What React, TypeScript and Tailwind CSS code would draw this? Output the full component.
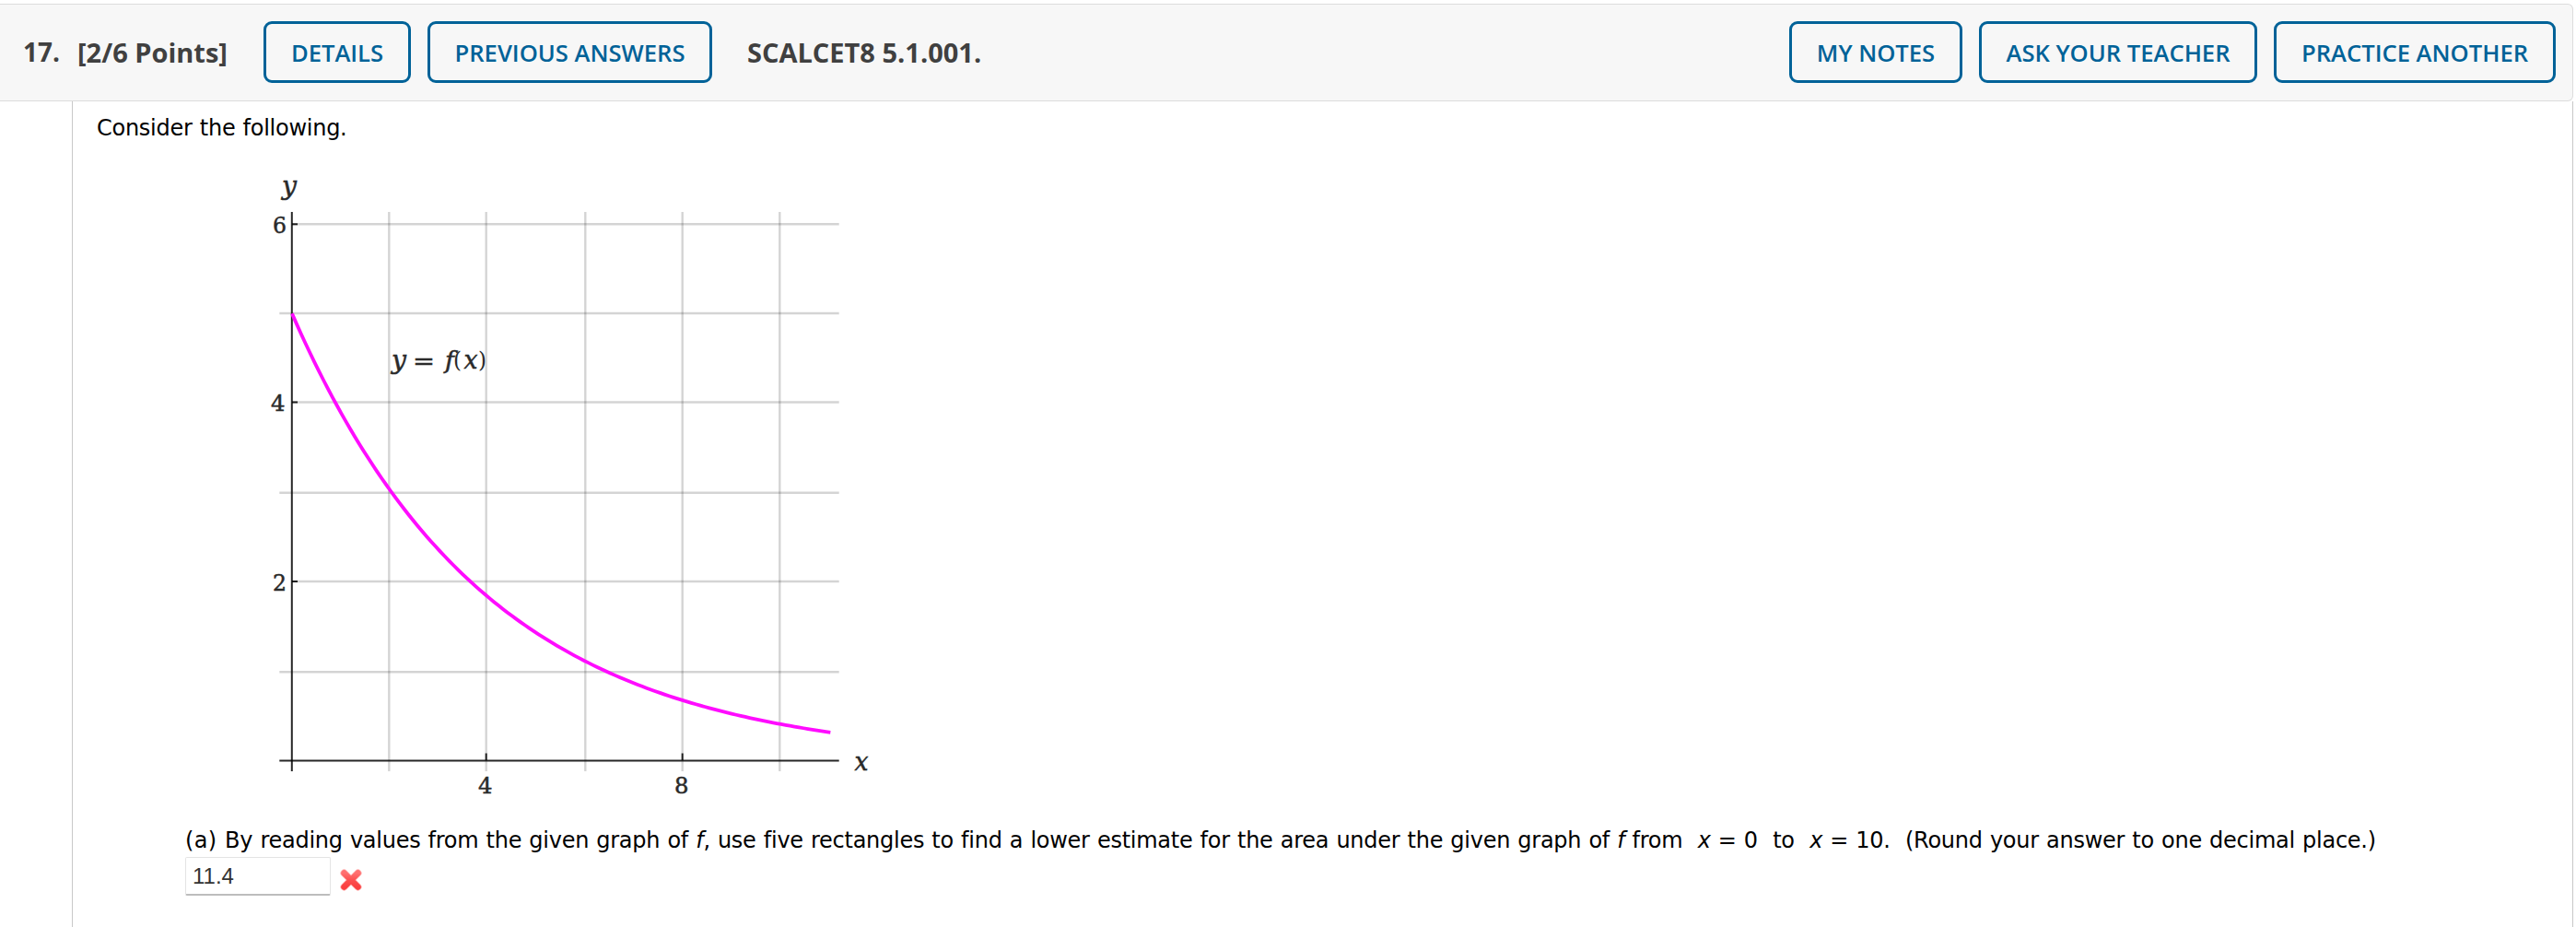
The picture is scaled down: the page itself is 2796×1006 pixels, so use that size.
import React from 'react';

const X0 = 317;
const Y0 = 825.5;
const UNIT_X = 52.93;
const UNIT_Y = 97.03;
const X_MAX = 11.04;
const STEPS = 120;

const gridX = [422.3, 527.7, 635.3, 740.7, 846.3];
const gridY = [243.3, 340, 436.5, 534.7, 631, 729.3];

const curvePoints = () => {
  const points: string[] = [];
  for (let i = 0; i <= STEPS; i++) {
    const x = (i / STEPS) * X_MAX;
    const px = X0 + x * UNIT_X;
    const py = Y0 - 5 * Math.exp(-x / 4) * UNIT_Y;
    points.push(`${px.toFixed(2)},${py.toFixed(2)}`);
  }
  return points.join(' ');
};

interface HeaderButtonProps {
  label: string;
  className: string;
}

const HeaderButton: React.FC<HeaderButtonProps> = ({ label, className }) => (
  <button
    type="button"
    className={`flex h-[67px] shrink-0 items-center justify-center whitespace-nowrap rounded-[9px] border-3 border-[#006298] pt-[3px] text-[25.6px] font-semibold text-[#006298] ${className}`}
  >
    {label}
  </button>
);

const Graph: React.FC = () => (
  <svg className="block h-[700px] w-[700px] font-['DejaVu_Serif',serif]" viewBox="263 180 700 700">
    {/* Grid */}
    <g stroke="#000" strokeOpacity="0.17" strokeWidth="2.4">
      {gridX.map((x) => (
        <line key={x} x1={x} x2={x} y1="230" y2="837" />
      ))}
      {gridY.map((y, i) => (
        <line key={y} x1={i % 2 ? 303.3 : 317} x2="910.7" y1={y} y2={y} />
      ))}
    </g>

    {/* Axes and ticks */}
    <g stroke="#000" strokeOpacity="0.85" strokeWidth="2">
      <line x1="316.8" x2="316.8" y1="230" y2="837" />
      <line x1="303.3" x2="910.7" y1="825.5" y2="825.5" />
      <line x1="317" x2="323" y1="243.3" y2="243.3" />
      <line x1="317" x2="323" y1="436.5" y2="436.5" />
      <line x1="317" x2="323" y1="631" y2="631" />
      <line x1="527.7" x2="527.7" y1="817.5" y2="825" />
      <line x1="740.7" x2="740.7" y1="817.5" y2="825" />
    </g>

    <polyline points={curvePoints()} fill="none" stroke="#ff0cff" strokeWidth="3.8" />

    {/* Labels */}
    <g fill="#2a2a2a" stroke="#2a2a2a" strokeWidth="0.5" fontSize="24">
      <text x="296" y="253" textLength="15" lengthAdjust="spacingAndGlyphs">6</text>
      <text x="294" y="446" textLength="15.5" lengthAdjust="spacingAndGlyphs">4</text>
      <text x="296" y="641" textLength="15" lengthAdjust="spacingAndGlyphs">2</text>
      <text x="519" y="861" textLength="15.5" lengthAdjust="spacingAndGlyphs">4</text>
      <text x="732" y="861" textLength="15.5" lengthAdjust="spacingAndGlyphs">8</text>
      <g fontStyle="italic" fontSize="28">
        <text x="306" y="211" textLength="16" lengthAdjust="spacingAndGlyphs">y</text>
        <text x="927.5" y="836" textLength="15" lengthAdjust="spacingAndGlyphs">x</text>
        <text x="425" y="399.5" textLength="16" lengthAdjust="spacingAndGlyphs">y</text>
        <text x="483" y="399.5" fontSize="26" textLength="10" lengthAdjust="spacingAndGlyphs">f</text>
        <text x="503.5" y="399.5" textLength="15" lengthAdjust="spacingAndGlyphs">x</text>
      </g>
      <text x="448" y="399.5" textLength="24" lengthAdjust="spacingAndGlyphs">=</text>
      <g strokeWidth="0">
        <text x="492" y="399" textLength="9" lengthAdjust="spacingAndGlyphs">(</text>
        <text x="519" y="399" textLength="9" lengthAdjust="spacingAndGlyphs">)</text>
      </g>
    </g>
  </svg>
);

const WrongMark: React.FC = () => (
  <svg className="ml-[6px] mt-3 h-8 w-8" viewBox="0 0 32 32">
    <defs>
      <linearGradient id="mark" x1="0" y1="0" x2="0" y2="1">
        <stop offset="0" stopColor="#ff7070" />
        <stop offset="0.5" stopColor="#fc5050" />
        <stop offset="1" stopColor="#fa4040" />
      </linearGradient>
    </defs>
    <g fill="none" strokeLinecap="round">
      <path d="M8.5 8.5 23.5 23.5M23.5 8.5 8.5 23.5" stroke="#ffb0b0" strokeWidth="8" />
      <path d="M8.5 8.5 23.5 23.5M23.5 8.5 8.5 23.5" stroke="url(#mark)" strokeWidth="6.4" />
    </g>
  </svg>
);

const App: React.FC = () => {
  return (
    <div className="h-[1006px] w-[2796px] overflow-hidden bg-white pt-1 text-black">
      {/* Question header */}
      <div className="flex h-[106px] w-[2793px] items-center rounded-r-md border border-l-0 border-[#dcdcdc] bg-[#f7f7f7] pb-px pr-[18px] font-['Open_Sans',sans-serif]">
        <div className="flex w-[286px] shrink-0 whitespace-pre pl-[25px] text-[29px] font-bold text-[#404040]">
          <span className="w-[59px] text-[28px] leading-[42px]">17.</span>
          <span>[2/6 Points]</span>
        </div>
        <HeaderButton label="DETAILS" className="w-[160px]" />
        <HeaderButton label="PREVIOUS ANSWERS" className="ml-[18px] w-[309px]" />
        <span className="ml-[38px] text-[29px] font-bold text-[#404040]">SCALCET8 5.1.001.</span>
        <div className="ml-auto flex gap-[18px]">
          <HeaderButton label="MY NOTES" className="w-[188px]" />
          <HeaderButton label="ASK YOUR TEACHER" className="w-[302px]" />
          <HeaderButton label="PRACTICE ANOTHER" className="w-[306px]" />
        </div>
      </div>

      {/* Question body */}
      <div className="ml-[78px] h-[896px] w-[2715px] border-x border-[#c8c8c8] pl-[26px] pt-[14px] font-['DejaVu_Sans',sans-serif] text-[24px] leading-[30px] tracking-[-0.26px] [word-spacing:0.8px]">
        <p>Consider the following.</p>
        <div className="ml-[158px] mt-[26px] tracking-normal [word-spacing:0]">
          <Graph />
        </div>
        <div className="ml-[96px] mt-[17px]">
          <p className="whitespace-pre">
            <span className="tracking-[0.3px]">(a) </span>By reading values from the given graph of <i>f</i>, use five rectangles to find a lower estimate for the area under the given graph of <i>f</i> from  <i>x</i> = 0  to  <i>x</i> = 10.  (Round your answer to one decimal place.)
          </p>
          <div className="flex">
            <div className="mt-[3px] h-[42px] w-[158px] rounded-[2px] border border-b-2 border-[#e4e4e4] border-b-[#bdbdbd] pl-[7px] pt-[5px] font-['Liberation_Sans',sans-serif] text-[24px] tracking-normal text-[#333]">
              11.4
            </div>
            <WrongMark />
          </div>
        </div>
      </div>
    </div>
  );
};

export default App;
